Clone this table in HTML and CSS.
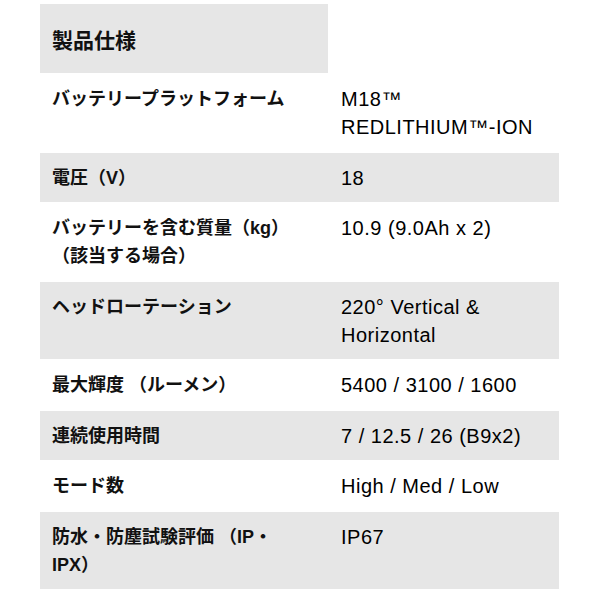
FILE: index.html
```html
<!DOCTYPE html>
<html lang="ja">
<head>
<meta charset="utf-8">
<link rel="stylesheet" href="styles.css">
</head>
<body>
<div class="spec">
  <div class="row header">
    <div class="head">製品仕様</div>
    <div class="blank"></div>
  </div>
  <div class="row white">
    <div class="label">バッテリープラットフォーム</div>
    <div class="value">M18™ REDLITHIUM™-ION</div>
  </div>
  <div class="row gray">
    <div class="label">電圧（V）</div>
    <div class="value">18</div>
  </div>
  <div class="row white">
    <div class="label">バッテリーを含む質量（kg）（該当する場合）</div>
    <div class="value">10.9 (9.0Ah x 2)</div>
  </div>
  <div class="row gray">
    <div class="label">ヘッドローテーション</div>
    <div class="value">220° Vertical &amp; Horizontal</div>
  </div>
  <div class="row white">
    <div class="label">最大輝度 （ルーメン）</div>
    <div class="value">5400 / 3100 / 1600</div>
  </div>
  <div class="row gray">
    <div class="label">連続使用時間</div>
    <div class="value">7 / 12.5 / 26 (B9x2)</div>
  </div>
  <div class="row white">
    <div class="label">モード数</div>
    <div class="value">High / Med / Low</div>
  </div>
  <div class="row gray">
    <div class="label">防水・防塵試験評価 （IP・IPX）</div>
    <div class="value">IP67</div>
  </div>
</div>
</body>
</html>
```

FILE: styles.css
```css
html, body {
  margin: 0;
  padding: 0;
  background: #ffffff;
}

.spec {
  margin: 4px 0 0 40px;
  width: 519px;
  color: #111111;
}

.row {
  display: grid;
  grid-template-columns: 288px 231px;
}

.header {
  height: 69px;
}

.head {
  background: #e6e6e6;
  display: flex;
  align-items: center;
  padding-left: 12px;
  font-family: "Noto Sans CJK JP", sans-serif;
  font-weight: 700;
  font-size: 21px;
}

.gray {
  background: #e6e6e6;
}

.white {
  background: #ffffff;
}

.label,
.value {
  line-height: 28px;
}

.gray .label,
.gray .value {
  padding-top: 11px;
  padding-bottom: 10px;
}

.white .label,
.white .value {
  padding-top: 12px;
  padding-bottom: 12px;
}

.label {
  padding-left: 12px;
  padding-right: 26px;
  font-family: "Liberation Sans", "Noto Sans CJK JP", sans-serif;
  font-weight: 700;
  font-size: 18px;
}

.value {
  padding-left: 13px;
  padding-right: 8px;
  font-family: "Liberation Sans", Arial, sans-serif;
  font-size: 20px;
  letter-spacing: 0.5px;
  color: #000000;
}
```
